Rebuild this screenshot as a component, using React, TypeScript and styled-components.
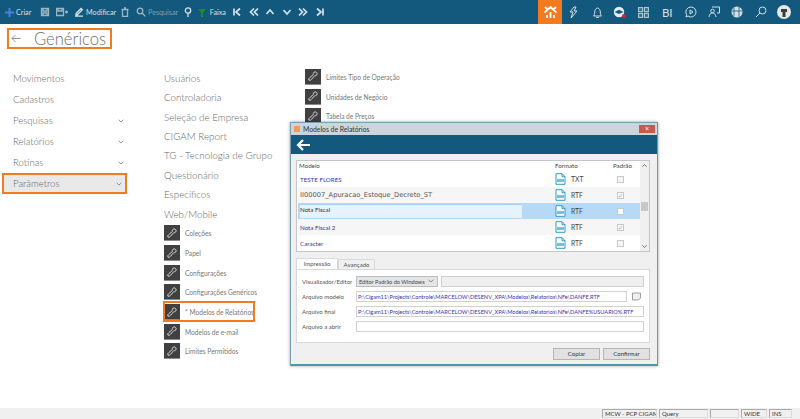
import React from "react";
import styled, { createGlobalStyle } from "styled-components";

const Global = createGlobalStyle`
  html, body { margin: 0; padding: 0; background: #fff; }
  body { font-family: Lato, "Open Sans", "Liberation Sans", sans-serif; overflow: hidden; }
  #root { width: 800px; height: 419px; }
  *, *::before, *::after { box-sizing: border-box; }
`;

const Page = styled.div`
  position: relative;
  width: 800px;
  height: 419px;
  display: flex;
  flex-direction: column;
  overflow: hidden;
`;

const Toolbar = styled.div`
  height: 24px;
  flex: none;
  background: #12597d;
  display: flex;
  align-items: center;
  padding-left: 5px;
`;

const ToolGroup = styled.div`
  display: flex;
  align-items: center;
  height: 24px;
  flex: 1;
`;

const Tool = styled.div<{ $w: number; $dim?: boolean }>`
  width: ${(p) => p.$w}px;
  flex: none;
  display: flex;
  align-items: center;
  gap: 2px;
  font-size: 7.2px;
  color: ${(p) => (p.$dim ? "#7f9fb1" : "#d6e1e7")};
  white-space: nowrap;
`;

const HomeTile = styled.div`
  width: 24px;
  height: 24px;
  background: #f47a20;
  display: flex;
  align-items: center;
  justify-content: center;
  flex: none;
`;

const RightTools = styled.div`
  display: flex;
  align-items: center;
  width: 238px;
  height: 24px;
  flex: none;
`;

const RightTool = styled.div`
  width: 23.4px;
  flex: none;
  display: flex;
  justify-content: center;
  align-items: center;
  color: #d5e0e6;
  font-size: 11.5px;
`;

const Main = styled.div`
  flex: 1;
  display: flex;
  flex-direction: column;
  min-height: 0;
  padding: 4px 0 0 7px;
`;

const TitleBox = styled.div`
  width: 105px;
  height: 21px;
  border: 2px solid #f47a20;
  display: flex;
  align-items: center;
  gap: 13px;
  padding-left: 2px;
  color: #6e6e6e;
  font-size: 16.6px;
  font-weight: 300;
  line-height: 18px;
  flex: none;
`;

const Columns = styled.div`
  display: flex;
  margin-top: 19px;
`;

const LeftMenu = styled.div`
  width: 162px;
  margin-left: -5px;
  flex: none;
  display: flex;
  flex-direction: column;
`;

const MenuItem = styled.div<{ $active?: boolean }>`
  width: 125px;
  height: 21px;
  display: flex;
  align-items: center;
  justify-content: space-between;
  padding: 0 3px 0 ${(p) => (p.$active ? "9px" : "11px")};
  font-size: 9.6px;
  font-weight: 300;
  color: #666;
  ${(p) => p.$active && "background:#e9e9e9; border:2px solid #f47a20;"}
`;

const MidColumn = styled.div`
  width: 141px;
  flex: none;
  display: flex;
  flex-direction: column;
`;

const SectionLink = styled.div`
  height: 19.45px;
  display: flex;
  align-items: center;
  font-size: 9.8px;
  font-weight: 300;
  color: #666;
`;

const IconRow = styled.div<{ $hl?: boolean }>`
  height: 19.7px;
  display: flex;
  align-items: center;
  gap: 5px;
  font-size: 6.6px;
  color: #777;
  white-space: nowrap;
  position: relative;
  ${(p) => p.$hl && `
    &::after {
      content: "";
      position: absolute;
      left: -1px;
      top: -1px;
      width: 92px;
      height: 21px;
      border: 2px solid #f47a20;
    }
  `}
`;

const KeyTile = styled.div`
  width: 16px;
  height: 16px;
  background: #404040;
  border-bottom: 1px solid #8a8a8a;
  flex: none;
  display: flex;
  align-items: center;
  justify-content: center;
`;

const RightColumn = styled.div`
  display: flex;
  flex-direction: column;
  margin-top: -1px;
`;

const StatusBar = styled.div`
  height: 11px;
  flex: none;
  background: #f0f0f0;
  display: flex;
  justify-content: flex-end;
  padding: 1px 8px 1px 0;
  margin-top: auto;
  gap: 2px;
`;

const StatusCell = styled.div<{ $w: number }>`
  width: ${(p) => p.$w}px;
  border: 1px solid #dcdcdc;
  border-top-color: #a9a9a9;
  border-left-color: #a9a9a9;
  font-size: 6px;
  line-height: 8px;
  padding-left: 2px;
  color: #333;
  white-space: nowrap;
  overflow: hidden;
`;

const Dialog = styled.div`
  position: absolute;
  left: 290px;
  top: 122px;
  width: 368px;
  height: 244px;
  background: #f0f0f0;
  border: 1px solid #7b9fb2;
  border-bottom: 2px solid #4b9aa8;
  border-right: 1px solid #6f97a8;
  box-shadow: 0 0 3px rgba(0, 0, 0, 0.4);
  display: flex;
  flex-direction: column;
`;

const DialogTitle = styled.div`
  height: 12px;
  background: #ccd5dc;
  display: flex;
  align-items: center;
  gap: 3px;
  padding-left: 3px;
  font-size: 6.8px;
  color: #333;
  flex: none;
`;

const TitleIcon = styled.div`
  width: 6px;
  height: 6px;
  background: #f19a5c;
  flex: none;
`;

const CloseBtn = styled.div`
  margin-left: auto;
  margin-right: 2px;
  width: 16px;
  height: 8px;
  background: #c9584f;
  color: #fff;
  font-size: 7px;
  line-height: 8px;
  text-align: center;
  font-family: "Liberation Sans", sans-serif;
`;

const DialogBand = styled.div`
  height: 19px;
  background: #12597d;
  display: flex;
  align-items: center;
  padding-left: 5px;
  flex: none;
`;

const DialogBody = styled.div`
  flex: 1;
  display: flex;
  flex-direction: column;
  padding: 6px 7px 0 5px;
`;

const ListBox = styled.div`
  height: 92px;
  border: 1px solid #c6c6c6;
  background: #fff;
  display: flex;
  flex: none;
  padding: 0 1px;
`;

const ListRows = styled.div`
  flex: 1;
  display: flex;
  flex-direction: column;
`;

const ListHeader = styled.div`
  height: 10px;
  display: grid;
  grid-template-columns: 256px 58px 1fr;
  font-size: 6.2px;
  line-height: 10px;
  color: #444;
  padding-left: 1px;
`;

const ListRow = styled.div<{ $bg: string }>`
  height: 16.2px;
  background: ${(p) => p.$bg};
  display: grid;
  grid-template-columns: 255px 57px 1fr;
  align-items: center;
  padding-left: 2px;
  font-size: 6.2px;
`;

const ModelName = styled.div<{ $mono?: boolean }>`
  color: ${(p) => (p.$mono ? "#555" : "#3a2fb0")};
  font-family: ${(p) => (p.$mono ? '"DejaVu Sans", sans-serif' : "inherit")};
  font-size: ${(p) => (p.$mono ? "6.7px" : "6.2px")};
`;

const EditCell = styled.div`
  width: 222px;
  height: 14px;
  background: #e6f2fd;
  border-top: 1px solid #a8d2f5;
  font-size: 6.2px;
  line-height: 9px;
  color: #333;
`;

const FormatCell = styled.div`
  display: flex;
  align-items: center;
  gap: 5px;
  font-size: 6.8px;
  color: #444;
`;

const DefaultBox = styled.div<{ $white?: boolean }>`
  width: 7px;
  height: 7px;
  border: 1px solid #c9c9c9;
  background: ${(p) => (p.$white ? "#fff" : "#f4f4f4")};
  color: #aaa;
  font-size: 6px;
  line-height: 5px;
  margin-left: 5px;
  font-family: "DejaVu Sans", sans-serif;
`;

const ScrollBar = styled.div`
  width: 9px;
  flex: none;
  margin-right: -1px;
  background: #f0f0f0;
  display: flex;
  flex-direction: column;
  align-items: center;
  justify-content: space-between;
  position: relative;
  padding: 3px 0;
`;

const ScrollThumb = styled.div`
  position: absolute;
  top: 41px;
  left: 1px;
  width: 7px;
  height: 9px;
  background: #c8c8c8;
`;

const Tabs = styled.div`
  display: flex;
  align-items: flex-end;
  height: 11px;
  margin-top: 6px;
  flex: none;
`;

const Tab = styled.div<{ $active?: boolean }>`
  width: ${(p) => (p.$active ? 42 : 37)}px;
  height: ${(p) => (p.$active ? 11 : 10)}px;
  background: ${(p) => (p.$active ? "#fff" : "#f0f0f0")};
  border: 1px solid #d9d9d9;
  border-bottom: 0;
  font-size: 6px;
  text-align: center;
  line-height: ${(p) => (p.$active ? 9 : 10)}px;
  color: #555;
`;

const TabPanel = styled.div`
  height: 74px;
  background: #fff;
  border: 1px solid #d9d9d9;
  padding: 6px 1px 0 5px;
  display: flex;
  flex-direction: column;
  gap: 5px;
  flex: none;
`;

const FieldRow = styled.div`
  display: flex;
  align-items: center;
  height: 10px;
`;

const FieldLabel = styled.div`
  width: 54px;
  flex: none;
  font-size: 6px;
  color: #555;
  white-space: nowrap;
`;

const SelectBox = styled.div`
  width: 82px;
  height: 11px;
  background: #e5e5e5;
  border: 1px solid #bdbdbd;
  font-size: 5.6px;
  line-height: 9px;
  padding: 0 3px 0 2px;
  color: #444;
  display: flex;
  align-items: center;
  justify-content: space-between;
  white-space: nowrap;
  flex: none;
`;

const DisabledInput = styled.div`
  width: 203px;
  height: 11px;
  margin-left: 3px;
  background: #efefef;
  border: 1px solid #d0d0d0;
  flex: none;
`;

const PathInput = styled.div<{ $w: number }>`
  width: ${(p) => p.$w}px;
  height: 11px;
  background: #fff;
  border: 1px solid #d0d0d0;
  font-size: 5.6px;
  line-height: 9px;
  padding-left: 1px;
  color: #3a2fb0;
  white-space: nowrap;
  overflow: hidden;
  flex: none;
`;

const NoteIcon = styled.div`
  margin-left: 5px;
  display: flex;
`;

const DialogFooter = styled.div`
  display: flex;
  justify-content: flex-end;
  gap: 3px;
  margin-top: 5px;
`;

const Button = styled.div`
  width: 47px;
  height: 12px;
  background: #e1e1e1;
  border: 1px solid #b5b5b5;
  font-size: 6px;
  line-height: 10px;
  text-align: center;
  color: #333;
`;

const s = { fill: "none", stroke: "#d6e1e7", strokeWidth: 1.3 } as const;
const Svg = ({ w = 10, children }: { w?: number; children: React.ReactNode }) => (
  <svg width={w} height={10} viewBox={`0 0 ${w} 10`} {...s}>{children}</svg>
);

const KeyIcon = () => (
  <svg width="10" height="10" viewBox="0 0 11 11" fill="none" stroke="#d4d4d4" strokeWidth="1.1">
    <path d="M6.400 1.600a2 2 0 0 1 3 3l-1.200.6-.8-.1L4 9 2.600 10.200 1 10l-.1-1.500L2 7.300l3.900-3.500-.1-.9z" />
  </svg>
);

const Chevron = () => (
  <svg width="6" height="4" viewBox="0 0 6 4" fill="none" stroke="#777" strokeWidth="0.8">
    <path d="M.6.8 3 3 5.400.8" />
  </svg>
);

const FileIcon = () => (
  <svg width="11" height="12" viewBox="0 0 11 12" fill="#fff" stroke="#2f9cc4" strokeWidth="1">
    <path d="M1 .7h6l3 3v7.600H1z" />
    <path d="M7 .7v3h3" fill="none" />
    <rect x="2" y="6" width="7" height="3" fill="#2f9cc4" stroke="none" opacity={0.65} />
  </svg>
);

const rows = [
  { name: "TESTE FLORES", fmt: "TXT", bg: "#fff", check: false },
  { name: "II00007_Apuracao_Estoque_Decreto_ST", fmt: "RTF", bg: "#f6f6f7", check: true, mono: true },
  { name: "Nota Fiscal", fmt: "RTF", bg: "#b5d9f7", check: false, edit: true },
  { name: "Nota Fiscal 2", fmt: "RTF", bg: "#f6f6f7", check: true },
  { name: "Caracter", fmt: "RTF", bg: "#fff", check: false },
];

const left = [
  ["Movimentos", false], ["Cadastros", false], ["Pesquisas", true],
  ["Relatórios", true], ["Rotinas", true], ["Parâmetros", true],
] as const;

const sections = ["Usuários", "Controladoria", "Seleção de Empresa", "CIGAM Report", "TG - Tecnologia de Grupo", "Questionário", "Específicos", "Web/Mobile"];
const webItems = ["Coleções", "Papel", "Configurações", "Configurações Genéricos", "* Modelos de Relatórios", "Modelos de e-mail", "Limites Permitidos"];
const rightItems = ["Limites Tipo de Operação", "Unidades de Negócio", "Tabela de Preços"];

export default function App() {
  return (
    <Page>
      <Global />
      <Toolbar>
        <ToolGroup>
          <Tool $w={35}>
            <svg width="9" height="9" viewBox="0 0 9 9"><path d="M3.500 0h2v3.500H9v2H5.500V9h-2V5.500H0v-2h3.500z" fill="#4d7fe0" /></svg>
            Criar
          </Tool>
          <Tool $w={16} $dim><Svg><path d="M1.500 1.500h7v7h-7zM3 1.500V4h4V1.500M3 8.500V6h4v2.500" stroke="#9db6c4" /></Svg></Tool>
          <Tool $w={18} $dim><Svg w={12}><path d="M.5 1.500h7v7h-7zM2 1.500V4h4V1.500M9 5h3M10.500 3.500v3" stroke="#9db6c4" /></Svg></Tool>
          <Tool $w={46}><Svg><path d="M1 9.200h8M2 6.500 7 1.500l1.300 1.300-5 5H2z" /></Svg>Modificar</Tool>
          <Tool $w={16} $dim><Svg><path d="M1.500 2.500h7M2.500 2.500v7h5v-7M4 1h2" stroke="#9db6c4" /></Svg></Tool>
          <Tool $w={47} $dim><Svg><circle cx="4" cy="4" r="2.800" stroke="#9db6c4" /><path d="M6 6l3.400 3.400" stroke="#9db6c4" /></Svg>Pesquisar</Tool>
          <Tool $w={15}><Svg><circle cx="5" cy="3.500" r="2.700" /><path d="M5 6.200V10" /></Svg></Tool>
          <Tool $w={34}>
            <svg width="8" height="9" viewBox="0 0 8 9"><path d="M0 1h8L5 4.500V9H3V4.500z" fill="#1f8a2c" /></svg>
            &nbsp;Faixa
          </Tool>
          <Tool $w={16.600}><Svg><path d="M2 1.500v7M8 1.500 4 5l4 3.500" strokeWidth="1.7" /></Svg></Tool>
          <Tool $w={16.600}><Svg><path d="M5 1.500 1.500 5 5 8.500M9 1.500 5.500 5 9 8.500" strokeWidth="1.7" /></Svg></Tool>
          <Tool $w={16.600}><Svg><path d="M1.500 7 5 3l3.500 4" strokeWidth="1.7" /></Svg></Tool>
          <Tool $w={16.600}><Svg><path d="M1.500 3 5 7l3.500-4" strokeWidth="1.7" /></Svg></Tool>
          <Tool $w={16.600}><Svg><path d="M1 1.500 4.500 5 1 8.500M5 1.500 8.500 5 5 8.500" strokeWidth="1.7" /></Svg></Tool>
          <Tool $w={14}><Svg><path d="M2 1.500 6 5 2 8.500M8 1.500v7" strokeWidth="1.7" /></Svg></Tool>
        </ToolGroup>
        <HomeTile>
          <svg width="13" height="13" viewBox="0 0 13 13" fill="none" stroke="#fff" strokeWidth="1.8">
            <path d="M.5 6.500 6.500 1l6 5.500M1 1l3 3M12 1 9 4M3 12V9M6.500 12V6M10 12V9" />
          </svg>
        </HomeTile>
        <RightTools>
          <RightTool>
            <svg width="11" height="13" viewBox="0 0 11 13" fill="none" stroke="#d5e0e6" strokeWidth="1"><path d="M6 1 2 6h3L3 12l6-7H6l2-4z" /></svg>
          </RightTool>
          <RightTool>
            <svg width="11" height="13" viewBox="0 0 11 13" fill="none" stroke="#d5e0e6" strokeWidth="1"><path d="M1.500 10h8c-1-1-1.200-2-1.200-4 0-2-1.200-4-2.800-4S2.700 4 2.700 6c0 2-.2 3-1.200 4zM4.200 11.500h2.600" /></svg>
          </RightTool>
          <RightTool>
            <svg width="14" height="13" viewBox="0 0 14 13">
              <circle cx="6" cy="6" r="5.200" fill="#e6edf1" />
              <path d="M1.500 6 6 3.800 10.500 6 6 8z" fill="#12597d" />
              <circle cx="11" cy="10" r="2" fill="#e0202a" />
            </svg>
          </RightTool>
          <RightTool>
            <svg width="11" height="11" viewBox="0 0 11 11" fill="#2f7292" stroke="#b5c9d4" strokeWidth="1.1">
              <rect x=".6" y=".6" width="4" height="4" /><rect x="6.400" y=".6" width="4" height="4" />
              <rect x=".6" y="6.400" width="4" height="4" /><rect x="6.400" y="6.400" width="4" height="4" />
            </svg>
          </RightTool>
          <RightTool>BI</RightTool>
          <RightTool>
            <svg width="12" height="12" viewBox="0 0 12 12" fill="none" stroke="#d5e0e6" strokeWidth="1"><path d="M6 1a5 5 0 1 1-3 9L1 11l.6-2.300A5 5 0 0 1 6 1z" /><path d="M5 4v4l3-2z" /></svg>
          </RightTool>
          <RightTool>
            <svg width="12" height="12" viewBox="0 0 12 12" fill="none" stroke="#d5e0e6" strokeWidth="1"><path d="M4 1h7.500v6H9" /><circle cx="4.500" cy="5" r="1.800" /><path d="M1 11c.3-2.500 1.500-4 3.500-4s3 1.500 3.500 4" /></svg>
          </RightTool>
          <RightTool>
            <svg width="12" height="12" viewBox="0 0 12 12" fill="#d5e0e6"><circle cx="6" cy="6" r="5.500" /><path d="M3 2v8M8 1v10M1 5h10" stroke="#12597d" strokeWidth=".8" /></svg>
          </RightTool>
          <RightTool>
            <svg width="12" height="12" viewBox="0 0 12 12" fill="none" stroke="#d5e0e6" strokeWidth="1"><circle cx="7.500" cy="4.500" r="3.500" /><path d="M5 7 1 11" /></svg>
          </RightTool>
          <RightTool>
            <svg width="14" height="14" viewBox="0 0 14 14"><circle cx="7" cy="7" r="7" fill="#e8e8e8" /><path d="M4 4h6v3H8.500v5h-3V7H4z" fill="#3c3c3c" /></svg>
          </RightTool>
        </RightTools>
      </Toolbar>
      <Main>
        <TitleBox>
          <svg width="10" height="9" viewBox="0 0 10 9" fill="none" stroke="#777" strokeWidth="0.8"><path d="M9.500 4.500H1M4.500 1 1 4.500 4.500 8" /></svg>
          Genéricos
        </TitleBox>
        <Columns>
          <LeftMenu>
            {left.map(([t, c]) => (
              <MenuItem key={t} $active={t === "Parâmetros"}>
                {t}
                {c && <Chevron />}
              </MenuItem>
            ))}
          </LeftMenu>
          <MidColumn>
            {sections.map((t) => <SectionLink key={t}>{t}</SectionLink>)}
            {webItems.map((t) => (
              <IconRow key={t} $hl={t.startsWith("*")}><KeyTile><KeyIcon /></KeyTile>{t}</IconRow>
            ))}
          </MidColumn>
          <RightColumn>
            {rightItems.map((t) => (
              <IconRow key={t}><KeyTile><KeyIcon /></KeyTile>{t}</IconRow>
            ))}
          </RightColumn>
        </Columns>
      </Main>
      <StatusBar>
        <StatusCell $w={55}>MCW - PCP CIGAM</StatusCell>
        <StatusCell $w={49}>Query</StatusCell>
        <StatusCell $w={29} />
        <StatusCell $w={26}>WIDE</StatusCell>
        <StatusCell $w={23}>INS</StatusCell>
      </StatusBar>
      <Dialog>
        <DialogTitle>
          <TitleIcon />
          Modelos de Relatórios
          <CloseBtn>×</CloseBtn>
        </DialogTitle>
        <DialogBand>
          <svg width="14" height="12" viewBox="0 0 14 12" fill="none" stroke="#fff" strokeWidth="2.200"><path d="M14 6H2M7 1 2 6l5 5" /></svg>
        </DialogBand>
        <DialogBody>
          <ListBox>
            <ListRows>
              <ListHeader><span>Modelo</span><span>Formato</span><span>Padrão</span></ListHeader>
              {rows.map((r) => (
                <ListRow key={r.name} $bg={r.bg}>
                  {r.edit ? <EditCell>{r.name}</EditCell> : <ModelName $mono={r.mono}>{r.name}</ModelName>}
                  <FormatCell><FileIcon />{r.fmt}</FormatCell>
                  <DefaultBox $white={r.edit}>{r.check ? "✓" : ""}</DefaultBox>
                </ListRow>
              ))}
            </ListRows>
            <ScrollBar>
              <svg width="5" height="3" viewBox="0 0 5 3" fill="none" stroke="#555" strokeWidth=".8"><path d="M.4 2.600 2.500.6l2.100 2" /></svg>
              <ScrollThumb />
              <svg width="5" height="3" viewBox="0 0 5 3" fill="none" stroke="#555" strokeWidth=".8"><path d="M.4.4l2.100 2 2.100-2" /></svg>
            </ScrollBar>
          </ListBox>
          <Tabs>
            <Tab $active>Impressão</Tab>
            <Tab>Avançado</Tab>
          </Tabs>
          <TabPanel>
            <FieldRow>
              <FieldLabel>Visualizador/Editor</FieldLabel>
              <SelectBox>Editor Padrão do Windows<Chevron /></SelectBox>
              <DisabledInput />
            </FieldRow>
            <FieldRow>
              <FieldLabel>Arquivo modelo</FieldLabel>
              <PathInput $w={271}>P:\Cigam11\Projects\Controle\MARCELOW\DESENV_XPA\Modelos\Relatorios\NFe\DANFE.RTF</PathInput>
              <NoteIcon>
                <svg width="9" height="9" viewBox="0 0 9 9" fill="#efefef" stroke="#888" strokeWidth=".8"><path d="M.5 1h8v5l-2 2h-6z" /></svg>
              </NoteIcon>
            </FieldRow>
            <FieldRow>
              <FieldLabel>Arquivo final</FieldLabel>
              <PathInput $w={288}>P:\Cigam11\Projects\Controle\MARCELOW\DESENV_XPA\Modelos\Relatorios\NFe\DANFE%USUARIO%.RTF</PathInput>
            </FieldRow>
            <FieldRow>
              <FieldLabel>Arquivo a abrir</FieldLabel>
              <PathInput $w={288} />
            </FieldRow>
          </TabPanel>
          <DialogFooter>
            <Button>Copiar</Button>
            <Button>Confirmar</Button>
          </DialogFooter>
        </DialogBody>
      </Dialog>
    </Page>
  );
}
